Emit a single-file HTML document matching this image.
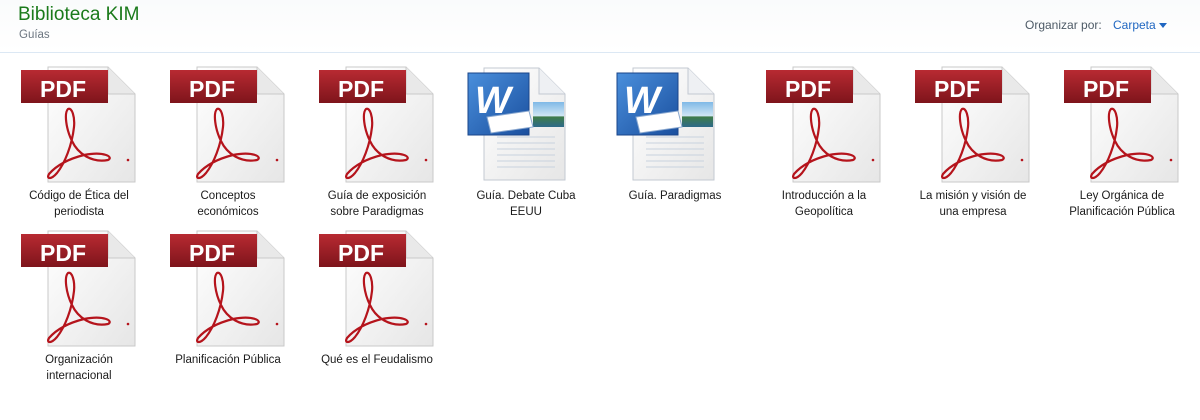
<!DOCTYPE html>
<html><head><meta charset="utf-8"><style>
html,body{margin:0;padding:0;width:1200px;height:420px;overflow:hidden;background:#fff;font-family:"Liberation Sans",sans-serif}
.hdr{position:absolute;left:0;top:0;width:1200px;height:52px;background:linear-gradient(180deg,#fafbfc,#fff);border-bottom:1px solid #dce8f4}
.t{position:absolute;left:18px;top:4px;font-size:19px;color:#1b7a1b}
.s{position:absolute;left:19px;top:29px;font-size:11.5px;color:#6c7680}
.org{position:absolute;left:1025px;top:18px;font-size:12px;color:#4d5a66}
.car{position:absolute;left:1113px;top:18px;font-size:12px;color:#1f66c1}
.tri{position:absolute;left:1159px;top:23px;width:0;height:0;border-left:4px solid transparent;border-right:4px solid transparent;border-top:5px solid #1f66c1}
.it{position:absolute;width:148px}
.it svg{position:absolute;left:15px;top:0}
.lb{position:absolute;top:118px;left:14px;width:120px;text-align:center;font-size:11.5px;line-height:16px;color:#1a1a1a}
</style></head><body>
<svg width="0" height="0" style="position:absolute">
<defs>
<linearGradient id="pg" x1="0" y1="0" x2="1" y2="1"><stop offset="0" stop-color="#fff"/><stop offset="1" stop-color="#e6e6e6"/></linearGradient>
<linearGradient id="rd" x1="0" y1="0" x2="0" y2="1"><stop offset="0" stop-color="#b82a32"/><stop offset="1" stop-color="#7e141b"/></linearGradient>
<linearGradient id="bl" x1="0" y1="0" x2="1" y2="1"><stop offset="0" stop-color="#4a8fdc"/><stop offset="1" stop-color="#1a4f9e"/></linearGradient>
<linearGradient id="sky" x1="0" y1="0" x2="0" y2="1"><stop offset="0" stop-color="#7fb9e6"/><stop offset=".55" stop-color="#cfe6f4"/><stop offset=".6" stop-color="#3f7c4a"/><stop offset="1" stop-color="#2d6a8a"/></linearGradient>
<g id="pdf">
<path d="M28,0 H88 L115,27 V115 H28 Z" fill="url(#pg)" stroke="#c9c9c9"/>
<path d="M88,0 V27 H115" fill="#e9e9e9" stroke="#c9c9c9"/>
<rect x="1" y="3" width="87" height="33" fill="url(#rd)"/>
<path d="M48,42 C44,46 46,62 52,74 C58,87 72,96 88,93 C94,90 84,84 64,88 C48,92 36,99 29,107 C26,112 31,113 37,106 C45,96 52,78 54,60 C55,50 52,40 48,42 Z" fill="none" stroke="#b5141c" stroke-width="2.2"/>
<circle cx="108" cy="93" r="1.3" fill="#b5141c"/>
</g>
<g id="doc">
<path d="M17,3 H72 L98,29 V115 H17 Z" fill="url(#pg)" stroke="#c3c9d2"/>
<path d="M72,3 V29 H98" fill="#eef0f3" stroke="#c3c9d2"/>
<g stroke="#c8d2de" stroke-width="1"><line x1="30" y1="72" x2="88" y2="72"/><line x1="30" y1="78" x2="88" y2="78"/><line x1="30" y1="84" x2="88" y2="84"/><line x1="30" y1="90" x2="88" y2="90"/><line x1="30" y1="96" x2="88" y2="96"/><line x1="30" y1="102" x2="88" y2="102"/></g>
<rect x="66" y="37" width="31" height="25" fill="url(#sky)"/>
<rect x="1" y="8" width="61" height="62" fill="url(#bl)" stroke="#1a458a"/>
<path d="M20,52 L62,46 L66,62 L24,68 Z" fill="#fff" stroke="#8aa8d0"/>
</g>
</defs></svg>

<div class="hdr"></div>
<div class="t">Biblioteca KIM</div>
<div class="s">Guías</div>
<div class="org">Organizar por:</div>
<div class="car">Carpeta</div>
<div class="tri"></div>

<div class="it" style="left:5px;top:70px"><svg width="120" height="118" viewBox="0 -2 120 118" style="top:-5px"><use href="#pdf"/><text x="20" y="30" font-family="Liberation Sans" font-weight="bold" font-size="23" fill="#fff">PDF</text></svg><div class="lb">Código de Ética del periodista</div></div>
<div class="it" style="left:154px;top:70px"><svg width="120" height="118" viewBox="0 -2 120 118" style="top:-5px"><use href="#pdf"/><text x="20" y="30" font-family="Liberation Sans" font-weight="bold" font-size="23" fill="#fff">PDF</text></svg><div class="lb">Conceptos<br>económicos</div></div>
<div class="it" style="left:303px;top:70px"><svg width="120" height="118" viewBox="0 -2 120 118" style="top:-5px"><use href="#pdf"/><text x="20" y="30" font-family="Liberation Sans" font-weight="bold" font-size="23" fill="#fff">PDF</text></svg><div class="lb">Guía de exposición sobre Paradigmas</div></div>
<div class="it" style="left:452px;top:70px"><svg width="120" height="118" viewBox="0 0 120 118" style="top:-5px"><use href="#doc"/><text x="8" y="48" font-family="Liberation Sans" font-weight="bold" font-style="italic" font-size="38" fill="#fff">W</text></svg><div class="lb">Guía. Debate Cuba<br>EEUU</div></div>
<div class="it" style="left:601px;top:70px"><svg width="120" height="118" viewBox="0 0 120 118" style="top:-5px"><use href="#doc"/><text x="8" y="48" font-family="Liberation Sans" font-weight="bold" font-style="italic" font-size="38" fill="#fff">W</text></svg><div class="lb">Guía. Paradigmas</div></div>
<div class="it" style="left:750px;top:70px"><svg width="120" height="118" viewBox="0 -2 120 118" style="top:-5px"><use href="#pdf"/><text x="20" y="30" font-family="Liberation Sans" font-weight="bold" font-size="23" fill="#fff">PDF</text></svg><div class="lb">Introducción a la Geopolítica</div></div>
<div class="it" style="left:899px;top:70px"><svg width="120" height="118" viewBox="0 -2 120 118" style="top:-5px"><use href="#pdf"/><text x="20" y="30" font-family="Liberation Sans" font-weight="bold" font-size="23" fill="#fff">PDF</text></svg><div class="lb">La misión y visión de<br>una empresa</div></div>
<div class="it" style="left:1048px;top:70px"><svg width="120" height="118" viewBox="0 -2 120 118" style="top:-5px"><use href="#pdf"/><text x="20" y="30" font-family="Liberation Sans" font-weight="bold" font-size="23" fill="#fff">PDF</text></svg><div class="lb" style="left:5px;width:138px">Ley Orgánica de<br>Planificación Pública</div></div>

<div class="it" style="left:5px;top:234px"><svg width="120" height="118" viewBox="0 -2 120 118" style="top:-5px"><use href="#pdf"/><text x="20" y="30" font-family="Liberation Sans" font-weight="bold" font-size="23" fill="#fff">PDF</text></svg><div class="lb">Organización<br>internacional</div></div>
<div class="it" style="left:154px;top:234px"><svg width="120" height="118" viewBox="0 -2 120 118" style="top:-5px"><use href="#pdf"/><text x="20" y="30" font-family="Liberation Sans" font-weight="bold" font-size="23" fill="#fff">PDF</text></svg><div class="lb">Planificación Pública</div></div>
<div class="it" style="left:303px;top:234px"><svg width="120" height="118" viewBox="0 -2 120 118" style="top:-5px"><use href="#pdf"/><text x="20" y="30" font-family="Liberation Sans" font-weight="bold" font-size="23" fill="#fff">PDF</text></svg><div class="lb">Qué es el Feudalismo</div></div>
</body></html>
